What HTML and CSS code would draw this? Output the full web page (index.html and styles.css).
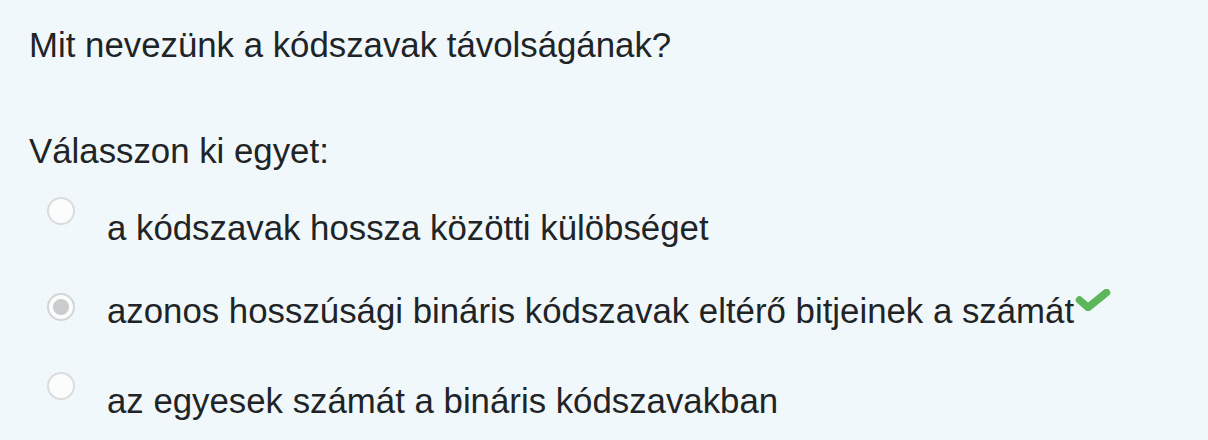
FILE: index.html
```html
<!DOCTYPE html>
<html lang="hu">
<head>
<meta charset="utf-8">
<title>Kérdés</title>
<link rel="stylesheet" href="styles.css">
</head>
<body>
<div class="formulation">
  <div class="qtext">Mit nevezünk a kódszavak távolságának?</div>
  <div class="prompt">Válasszon ki egyet:</div>
  <div class="answer">
    <div class="option option--first">
      <span class="radio"></span>
      <span class="label">a kódszavak hossza közötti külöbséget</span>
    </div>
    <div class="option option--checked">
      <span class="radio radio--checked"></span>
      <span class="label">azonos hosszúsági bináris kódszavak eltérő bitjeinek a számát<svg class="check" viewBox="0 0 36 22" width="36" height="22" aria-hidden="true"><path d="M4.5 11 L13 18.5 L31.5 3.5" fill="none" stroke="#5cb65a" stroke-width="7.5" stroke-linecap="round" stroke-linejoin="round"/></svg></span>
    </div>
    <div class="option option--last">
      <span class="radio"></span>
      <span class="label">az egyesek számát a bináris kódszavakban</span>
    </div>
  </div>
</div>
</body>
</html>
```

FILE: styles.css
```css
html, body {
  margin: 0;
  padding: 0;
  background: #f1f8fb;
}

body {
  width: 1208px;
  height: 440px;
  overflow: hidden;
  font-family: "Liberation Sans", Arial, sans-serif;
  font-size: 34.8px;
  line-height: 52px;
  color: #1f2427;
}

.formulation {
  padding: 19px 0 0 29px;
}

.prompt {
  margin-top: 54px;
}

.answer {
  display: flex;
  flex-direction: column;
}

.option {
  display: flex;
  align-items: flex-start;
  padding-left: 18px;
}

.option--first {
  margin-top: 20px;
}

.option--first .label {
  padding-top: 5px;
}

.option--checked {
  margin-top: 31px;
}

.option--checked .radio {
  margin-top: 8px;
}

.option--last {
  margin-top: 35px;
}

.option--last .label {
  padding-top: 3px;
}

.radio {
  flex: none;
  box-sizing: border-box;
  width: 28px;
  height: 28px;
  border: 2px solid #dadcdd;
  border-radius: 50%;
  background: #fbfcfc;
  margin-right: 32px;
}

.radio--checked {
  border-color: #d3d5d6;
  background: radial-gradient(circle, #cacccd 0 7.5px, #fbfcfc 8.5px);
}

.label {
  white-space: nowrap;
}

.check {
  vertical-align: 12px;
  margin-left: 1px;
}
```
